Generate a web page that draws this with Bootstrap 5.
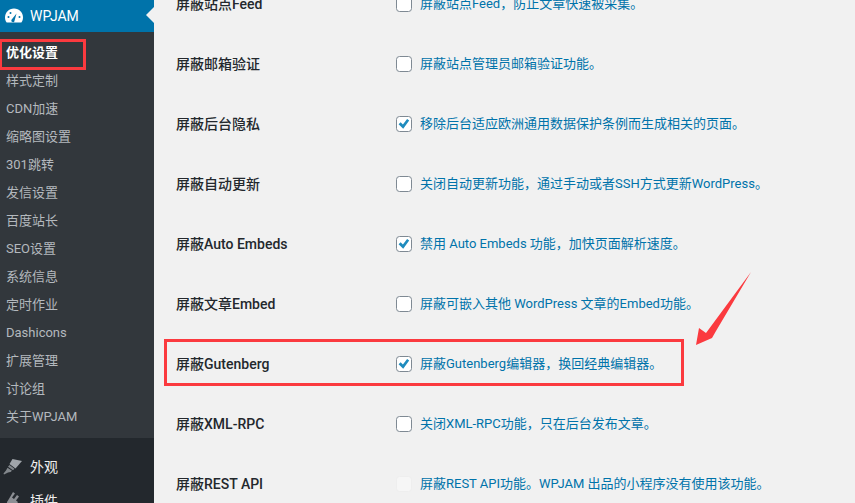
<!DOCTYPE html>
<html lang="zh-CN">
<head>
  <meta charset="UTF-8">
  <title>优化设置</title>
  <link href="https://cdn.jsdelivr.net/npm/bootstrap@5.3.3/dist/css/bootstrap.min.css" rel="stylesheet">
  <style>
    html, body { height: 100%; overflow: hidden; }
    body { background: #f1f1f1; font: 14px/20px Roboto, "Noto Sans CJK SC", sans-serif; color: #23282d; }
    .wp-side { width: 154px; background: #23282d; flex: none; height: 503px; overflow: hidden; }
    .wp-current { height: 32px; background: #0073aa; color: #fff; padding-left: 30px; }
    .wp-current svg { left: 4px; top: 7px; }
    .wp-notch { right: 0; top: 7px; border: 8px solid transparent; border-right-color: #f1f1f1; border-left-width: 0; }
    .wp-sub { background: #32373c; padding: 7px 0; }
    .wp-sub a { display: block; height: 28px; line-height: 28px; padding-left: 6px; color: #b4b9be; text-decoration: none; font-size: 13px; }
    .wp-sub a.wp-on { color: #fff; font-weight: 700; }
    .wp-menu { padding-top: 12px; }
    .wp-menu div { height: 34px; line-height: 34px; color: #eee; padding-left: 30px; }
    .wp-menu svg { left: 3px; top: 7px; }
    .opt-list { margin-top: -26px; padding-left: 22px; }
    .opt-row { height: 60px; }
    .opt-label { width: 220px; font-weight: 500; }
    .opt-box { width: 16px; height: 16px; margin: 0 8px 0 0; border: 1px solid #7e8993; border-radius: 4px; background-color: #fff; }
    .opt-box:checked { background-color: #fff; border-color: #7e8993; background-size: 16px; background-image: url("data:image/svg+xml,%3Csvg xmlns='http://www.w3.org/2000/svg' viewBox='0 0 16 16'%3E%3Cpath d='M2.600 8.200l2-2 2.300 2.400 4.200-5.600 2.100 1.500-6 8.300z' fill='%231e8cbe'/%3E%3C/svg%3E"); }
    .opt-box:disabled { opacity: 1; background: #f6f6f6; border-color: #eee; }
    .opt-desc { color: #0073aa; white-space: nowrap; font-size: 13px; }
    .mark-box { border: 3px solid #fb3a3f; }
    .mark-side { left: -1px; top: 39px; width: 87px; height: 31px; }
    .mark-row { left: 164px; top: 339px; width: 520px; height: 47px; }
    .mark-arrow { left: 0; top: 0; }
  </style>
</head>
<body class="position-relative">
  <div class="d-flex">
    <!-- admin menu -->
    <div class="wp-side">
      <div class="wp-current position-relative d-flex align-items-center">
        <svg class="position-absolute" width="20" height="18" viewBox="0 0 20 18"><path d="M10 1.500C4.800 1.500 1 5.700 1 10.500c0 2 .6 3.700 1.700 5h14.600c1.100-1.300 1.700-3 1.700-5 0-4.800-3.800-9-9-9z" fill="#fff"/><path d="M7.500 12.800l5-6.300-2 7.200a1.600 1.600 0 1 1-3-.9z" fill="#0073aa"/><circle cx="4.500" cy="10" r="1" fill="#0073aa"/><circle cx="6.500" cy="6" r="1" fill="#0073aa"/><circle cx="15.500" cy="10" r="1" fill="#0073aa"/></svg>
        <span>WPJAM</span>
        <span class="wp-notch position-absolute"></span>
      </div>
      <div class="wp-sub">
        <a class="wp-on" href="#">优化设置</a>
        <a href="#">样式定制</a>
        <a href="#">CDN加速</a>
        <a href="#">缩略图设置</a>
        <a href="#">301跳转</a>
        <a href="#">发信设置</a>
        <a href="#">百度站长</a>
        <a href="#">SEO设置</a>
        <a href="#">系统信息</a>
        <a href="#">定时作业</a>
        <a href="#">Dashicons</a>
        <a href="#">扩展管理</a>
        <a href="#">讨论组</a>
        <a href="#">关于WPJAM</a>
      </div>
      <div class="wp-menu">
        <div class="position-relative">
          <svg class="position-absolute" width="20" height="20" viewBox="0 0 20 20"><path d="M9.500 2l9.500 2-6.500 7.500-6-4.500z" fill="#a0a5aa"/><path d="M6.500 8l5 3.700-1.500 1.500-5-3.500z" fill="#82878c"/><path d="M4.500 10.800l4.500 3-1.500 1.200-2.500.5-4 2-.5-1 2.500-3z" fill="#82878c"/></svg>
          外观
        </div>
        <div class="position-relative">
          <svg class="position-absolute" width="20" height="20" viewBox="0 0 20 20"><path d="M10 1l2 1.500-3 4 2 1.500 3-4 2 1.500-3 4 2 1.500-3 4.500c-1.500 1.500-3.500 1.500-5 .5L5 19H2.500v-2.500l2-2c-1-1.500-1-3.500.5-5z" fill="#8c8f94"/></svg>
          插件
        </div>
      </div>
    </div>

    <!-- settings rows -->
    <div class="opt-list flex-grow-1">
      <div class="opt-row d-flex align-items-center">
        <div class="opt-label">屏蔽站点Feed</div>
        <input class="form-check-input opt-box" type="checkbox">
        <span class="opt-desc">屏蔽站点Feed，防止文章快速被采集。</span>
      </div>
      <div class="opt-row d-flex align-items-center">
        <div class="opt-label">屏蔽邮箱验证</div>
        <input class="form-check-input opt-box" type="checkbox">
        <span class="opt-desc">屏蔽站点管理员邮箱验证功能。</span>
      </div>
      <div class="opt-row d-flex align-items-center">
        <div class="opt-label">屏蔽后台隐私</div>
        <input class="form-check-input opt-box" type="checkbox" checked>
        <span class="opt-desc">移除后台适应欧洲通用数据保护条例而生成相关的页面。</span>
      </div>
      <div class="opt-row d-flex align-items-center">
        <div class="opt-label">屏蔽自动更新</div>
        <input class="form-check-input opt-box" type="checkbox">
        <span class="opt-desc">关闭自动更新功能，通过手动或者SSH方式更新WordPress。</span>
      </div>
      <div class="opt-row d-flex align-items-center">
        <div class="opt-label">屏蔽Auto Embeds</div>
        <input class="form-check-input opt-box" type="checkbox" checked>
        <span class="opt-desc">禁用 Auto Embeds 功能，加快页面解析速度。</span>
      </div>
      <div class="opt-row d-flex align-items-center">
        <div class="opt-label">屏蔽文章Embed</div>
        <input class="form-check-input opt-box" type="checkbox">
        <span class="opt-desc">屏蔽可嵌入其他 WordPress 文章的Embed功能。</span>
      </div>
      <div class="opt-row d-flex align-items-center">
        <div class="opt-label">屏蔽Gutenberg</div>
        <input class="form-check-input opt-box" type="checkbox" checked>
        <span class="opt-desc">屏蔽Gutenberg编辑器，换回经典编辑器。</span>
      </div>
      <div class="opt-row d-flex align-items-center">
        <div class="opt-label">屏蔽XML-RPC</div>
        <input class="form-check-input opt-box" type="checkbox">
        <span class="opt-desc">关闭XML-RPC功能，只在后台发布文章。</span>
      </div>
      <div class="opt-row d-flex align-items-center">
        <div class="opt-label">屏蔽REST API</div>
        <input class="form-check-input opt-box" type="checkbox" disabled>
        <span class="opt-desc">屏蔽REST API功能。WPJAM 出品的小程序没有使用该功能。</span>
      </div>
    </div>
  </div>

  <!-- red annotations drawn over the screenshot -->
  <div class="mark-box mark-side position-absolute"></div>
  <div class="mark-box mark-row position-absolute"></div>
  <svg class="mark-arrow position-absolute" width="855" height="503"><polygon points="751,272 716,331 712,338 696,345 699,328 706,333" fill="#fb3a3f"/></svg>

  <script src="https://cdn.jsdelivr.net/npm/bootstrap@5.3.3/dist/js/bootstrap.bundle.min.js"></script>
</body>
</html>
